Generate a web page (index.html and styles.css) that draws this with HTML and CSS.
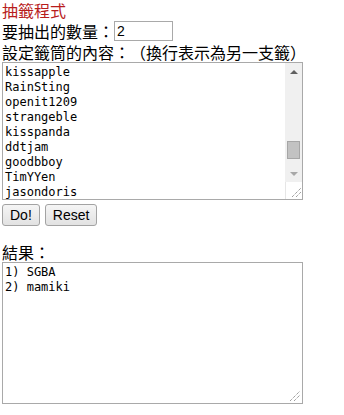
FILE: index.html
```html
<!DOCTYPE html>
<html>
<head>
<meta charset="utf-8">
<link rel="stylesheet" href="styles.css">
</head>
<body>
<div class="page">
  <div class="title">抽籤程式</div>
  <div class="row">要抽出的數量：<input class="num" type="text" value="2"></div>
  <div class="row label">設定籤筒的內容：（換行表示為另一支籤）</div>
  <div class="box box-list">
    <textarea class="area" spellcheck="false">kissapple
RainSting
openit1209
strangeble
kisspanda
ddtjam
goodbboy
TimYYen
jasondoris</textarea>
    <div class="sbar">
      <div class="arrow up"></div>
      <div class="track"><div class="thumb"></div></div>
      <div class="arrow down"></div>
      <div class="corner"><svg width="17" height="17" viewBox="0 0 17 17"><path d="M6 15 L15 6 M10 15 L15 10" stroke="#777" stroke-width="1" stroke-dasharray="1 1"/></svg></div>
    </div>
  </div>
  <div class="buttons">
    <button class="btn">Do!</button>
    <button class="btn">Reset</button>
  </div>
  <div class="row result-label">結果：</div>
  <div class="box box-result">
    <textarea class="area" spellcheck="false">1) SGBA
2) mamiki</textarea>
    <div class="grip"><svg width="12" height="12" viewBox="0 0 12 12"><path d="M1 11 L11 1 M5 11 L11 5" stroke="#777" stroke-width="1" stroke-dasharray="1 1"/></svg></div>
  </div>
</div>
</body>
</html>
```
FILE: styles.css
```css
html, body {
  margin: 0;
  padding: 0;
  background: #fff;
}
.page {
  padding: 0 0 0 2px;
  font-family: "Noto Sans CJK TC", "Noto Sans", sans-serif;
  font-size: 16px;
  color: #000;
  text-spacing-trim: space-all;
  font-feature-settings: "chws" 0, "halt" 0;
}
.title {
  color: #b81c1c;
  line-height: 20px;
  height: 20px;
}
.row {
  line-height: 20px;
  display: flex;
  align-items: center;
  white-space: nowrap;
}
.row:nth-child(2) {
  height: 22px;
}
.num {
  box-sizing: border-box;
  width: 59px;
  height: 20px;
  border: 1px solid #a9a9a9;
  padding: 0 2px;
  margin: 0;
  font-family: "Liberation Sans", Arial, sans-serif;
  font-size: 14px;
  outline: none;
}
.label {
  height: 20px;
}
.box {
  position: relative;
  box-sizing: border-box;
  width: 301px;
  border: 1px solid #a9a9a9;
  display: flex;
  background: #fff;
}
.box-list {
  height: 138px;
}
.box-result {
  height: 142px;
}
.area {
  flex: 1;
  border: none;
  outline: none;
  resize: none;
  margin: 0;
  padding: 2px 2px;
  font-family: "DejaVu Sans Mono", monospace;
  font-size: 12px;
  line-height: 15px;
  color: #000;
  overflow: hidden;
  background: transparent;
}
.sbar {
  width: 17px;
  display: flex;
  flex-direction: column;
  background: #f0f0f0;
}
.arrow {
  height: 17px;
  display: flex;
  align-items: center;
  justify-content: center;
}
.arrow::before {
  content: "";
  width: 0;
  height: 0;
  border-left: 4px solid transparent;
  border-right: 4px solid transparent;
}
.up::before {
  border-bottom: 4px solid #606060;
}
.down::before {
  border-top: 4px solid #a8a8a8;
}
.track {
  flex: 1;
  display: flex;
  flex-direction: column;
  justify-content: flex-end;
  padding: 0 2px 6px;
}
.thumb {
  height: 16px;
  background: #c2c2c2;
  border: 1px solid #a6a6a6;
}
.corner {
  height: 17px;
  background: #fff;
  border-left: 1px solid #e6e6e6;
  box-sizing: border-box;
}
.corner svg {
  display: block;
}
.grip {
  position: absolute;
  right: 1px;
  bottom: 1px;
  width: 12px;
  height: 12px;
}
.grip svg {
  display: block;
}
.buttons {
  display: flex;
  gap: 5px;
  margin-top: 4px;
  height: 22px;
}
.btn {
  box-sizing: border-box;
  height: 22px;
  padding: 0 7px;
  font-family: "Liberation Sans", Arial, sans-serif;
  font-size: 14px;
  color: #000;
  border: 1px solid #a3a3a3;
  border-radius: 3px;
  background: linear-gradient(#f5f5f5, #e2e2e2);
  margin: 0;
}
.result-label {
  margin-top: 16px;
  height: 20px;
}
```
